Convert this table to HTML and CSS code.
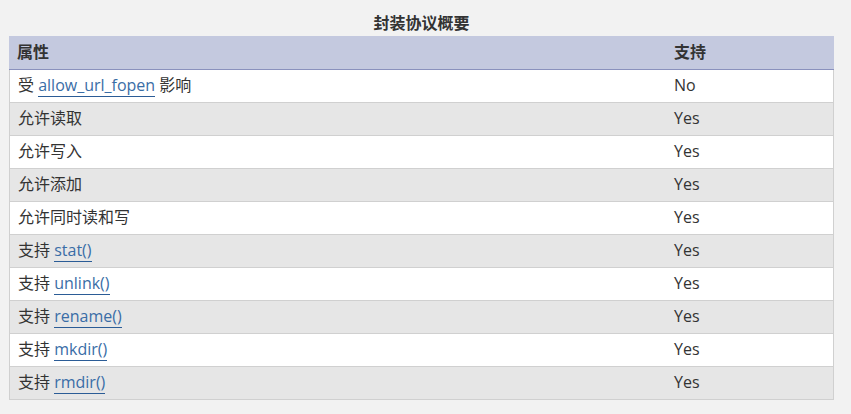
FILE: index.html
```html
<!DOCTYPE html>
<html lang="zh-CN">
<head>
<meta charset="utf-8">
<title>封装协议概要</title>
<link rel="stylesheet" href="styles.css">
</head>
<body>
<div class="page">
  <table class="summary">
    <caption>封装协议概要</caption>
    <colgroup>
      <col class="col-attr">
      <col class="col-support">
    </colgroup>
    <thead>
      <tr><th>属性</th><th>支持</th></tr>
    </thead>
    <tbody>
      <tr><td>受 <a href="#">allow_url_fopen</a> 影响</td><td>No</td></tr>
      <tr><td>允许读取</td><td>Yes</td></tr>
      <tr><td>允许写入</td><td>Yes</td></tr>
      <tr><td>允许添加</td><td>Yes</td></tr>
      <tr><td>允许同时读和写</td><td>Yes</td></tr>
      <tr><td>支持 <a href="#">stat()</a></td><td>Yes</td></tr>
      <tr><td>支持 <a href="#">unlink()</a></td><td>Yes</td></tr>
      <tr><td>支持 <a href="#">rename()</a></td><td>Yes</td></tr>
      <tr><td>支持 <a href="#">mkdir()</a></td><td>Yes</td></tr>
      <tr><td>支持 <a href="#">rmdir()</a></td><td>Yes</td></tr>
    </tbody>
  </table>
</div>
</body>
</html>
```
FILE: styles.css
```css
html, body {
  margin: 0;
  padding: 0;
  background: #f2f2f2;
}
body {
  font-family: "Open Sans", "Noto Sans CJK SC", sans-serif;
  font-size: 16px;
  color: #333;
}
.page {
  padding: 11px 17px 0 9px;
}
.summary {
  width: 825px;
  table-layout: fixed;
  border-collapse: separate;
  border-spacing: 0;
}
.col-attr { width: 657px; }
.col-support { width: 168px; }
.summary caption {
  font-weight: bold;
  line-height: 24px;
  padding-bottom: 1px;
  text-align: center;
}
.summary th {
  background: #c4c9df;
  border-bottom: 1px solid #8a91bd;
  text-align: left;
  font-weight: bold;
  line-height: 25px;
  padding: 4px 8px;
}
.summary td {
  line-height: 24px;
  padding: 3px 8px 5px;
  border-bottom: 1px solid #d0d0d0;
  background: #fff;
}
.summary td:first-child { border-left: 1px solid #d0d0d0; }
.summary td:last-child { border-right: 1px solid #d0d0d0; }
.summary tbody tr:nth-child(even) td { background: #e6e6e6; }
.summary a {
  color: #3a6da6;
  text-decoration: none;
  border-bottom: 1px solid #2b5c96;
}
```
